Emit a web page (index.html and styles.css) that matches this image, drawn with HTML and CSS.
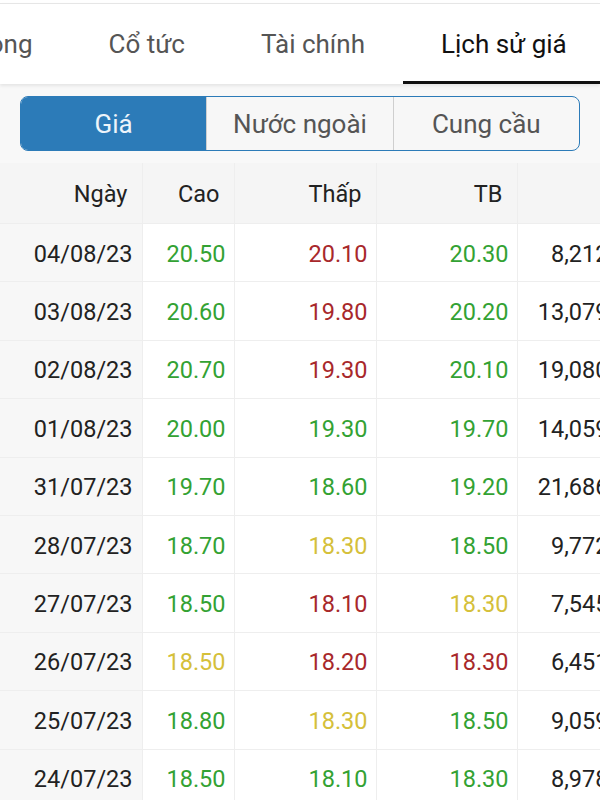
FILE: index.html
```html
<!DOCTYPE html>
<html lang="vi">
<head>
  <meta charset="UTF-8">
  <title>Lịch sử giá</title>
  <link rel="stylesheet" href="styles.css">
</head>
<body>
  <div class="tabs">
    <div class="tab-strip">
      <div class="tab">Cổ đông</div>
      <div class="tab">Cổ tức</div>
      <div class="tab">Tài chính</div>
      <div class="tab active">Lịch sử giá</div>
    </div>
  </div>

  <div class="filter">
    <div class="segment">
      <div class="seg active">Giá</div>
      <div class="seg">Nước ngoài</div>
      <div class="seg">Cung cầu</div>
    </div>
  </div>

  <table class="history">
    <colgroup>
      <col class="c-date">
      <col class="c-high">
      <col class="c-low">
      <col class="c-avg">
      <col class="c-vol">
    </colgroup>
    <thead>
      <tr>
        <th>Ngày</th>
        <th>Cao</th>
        <th>Thấp</th>
        <th>TB</th>
        <th></th>
      </tr>
    </thead>
    <tbody>
      <tr><td>04/08/23</td><td class="up">20.50</td><td class="down">20.10</td><td class="up">20.30</td><td>8,212</td></tr>
      <tr><td>03/08/23</td><td class="up">20.60</td><td class="down">19.80</td><td class="up">20.20</td><td>13,079</td></tr>
      <tr><td>02/08/23</td><td class="up">20.70</td><td class="down">19.30</td><td class="up">20.10</td><td>19,080</td></tr>
      <tr><td>01/08/23</td><td class="up">20.00</td><td class="up">19.30</td><td class="up">19.70</td><td>14,059</td></tr>
      <tr><td>31/07/23</td><td class="up">19.70</td><td class="up">18.60</td><td class="up">19.20</td><td>21,686</td></tr>
      <tr><td>28/07/23</td><td class="up">18.70</td><td class="ref">18.30</td><td class="up">18.50</td><td>9,772</td></tr>
      <tr><td>27/07/23</td><td class="up">18.50</td><td class="down">18.10</td><td class="ref">18.30</td><td>7,545</td></tr>
      <tr><td>26/07/23</td><td class="ref">18.50</td><td class="down">18.20</td><td class="down">18.30</td><td>6,451</td></tr>
      <tr><td>25/07/23</td><td class="up">18.80</td><td class="ref">18.30</td><td class="up">18.50</td><td>9,059</td></tr>
      <tr><td>24/07/23</td><td class="up">18.50</td><td class="up">18.10</td><td class="up">18.30</td><td>8,978</td></tr>
    </tbody>
  </table>
</body>
</html>
```

FILE: styles.css
```css
body {
  margin: 0;
  width: 600px;
  height: 800px;
  overflow: hidden;
  font-family: Roboto, "Noto Sans", sans-serif;
  font-size: 23.5px;
  color: #222;
  background: #fff;
}
.tabs {
  margin-top: 3px;
  border-top: 1px solid #e6e6e6;
  background: #fff;
  box-shadow: 0 2px 3px rgba(0, 0, 0, 0.08);
  position: relative;
  z-index: 1;
  overflow: hidden;
}
.tab-strip {
  display: flex;
  margin-left: -103px;
}
.tab {
  flex: none;
  padding: 4px 38px 0;
  height: 73px;
  line-height: 73px;
  font-size: 26px;
  color: #555;
  white-space: nowrap;
  border-bottom: 3px solid transparent;
}
.tab.active {
  color: #111;
  border-bottom-color: #111;
}
.filter {
  background: #f8f8f8;
  padding: 12px 20px;
}
.segment {
  display: flex;
  box-sizing: border-box;
  height: 55px;
  border: 1.5px solid #2c7bb8;
  border-radius: 8px;
  overflow: hidden;
  background: #f7f7f7;
  font-size: 26px;
}
.seg {
  flex: 1;
  display: flex;
  align-items: center;
  justify-content: center;
  color: #555;
  border-left: 1px solid #cfcfcf;
}
.seg:first-child {
  border-left: none;
}
.seg.active {
  background: #2c7bb8;
  color: #eef4fa;
}
.history {
  border-collapse: collapse;
  table-layout: fixed;
  width: 617px;
}
.c-date { width: 142px; }
.c-high { width: 92px; }
.c-low { width: 142px; }
.c-avg { width: 141px; }
.c-vol { width: 100px; }
th, td {
  text-align: right;
  white-space: nowrap;
  border: 1px solid #eeeeee;
  border-top: none;
}
th {
  font-weight: normal;
  background: #f5f5f5;
  height: 58px;
  padding: 2px 14px 0 0;
}
td {
  height: 55.4px;
  padding: 2px 8px 0 0;
}
td:first-child {
  background: #f7f7f7;
  padding-right: 9px;
}
th:first-child, td:first-child {
  border-left: none;
}
.up { color: #33a233; }
.down { color: #a8282b; }
.ref { color: #d5c03a; }
```
